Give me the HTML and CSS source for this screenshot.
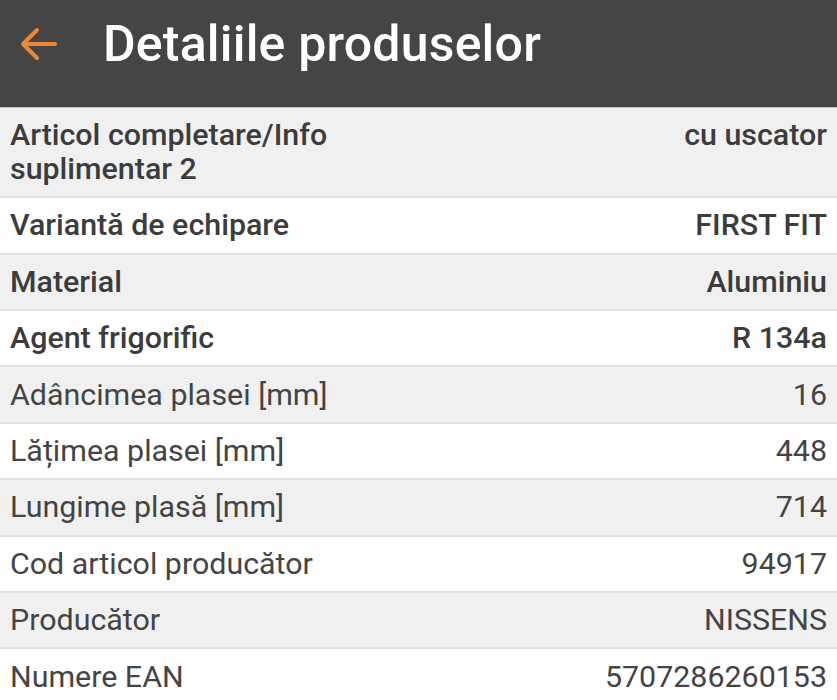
FILE: index.html
```html
<!DOCTYPE html>
<html lang="ro">
<head>
<meta charset="utf-8">
<title>Detaliile produselor</title>
<link rel="stylesheet" href="styles.css">
</head>
<body>
<header class="appbar">
  <svg class="back" width="40" height="40" viewBox="0 0 40 40" aria-hidden="true">
    <path d="M37 20H5M19 6L5 20l14 14" fill="none" stroke="#ea8838" stroke-width="4" stroke-linecap="round" stroke-linejoin="round"/>
  </svg>
  <h1 class="title">Detaliile produselor</h1>
</header>
<main class="list">
  <div class="row strong"><span class="label">Articol completare/Info suplimentar 2</span><span class="value">cu uscator</span></div>
  <div class="row strong"><span class="label">Variantă de echipare</span><span class="value">FIRST FIT</span></div>
  <div class="row strong"><span class="label">Material</span><span class="value">Aluminiu</span></div>
  <div class="row strong"><span class="label">Agent frigorific</span><span class="value">R 134a</span></div>
  <div class="row"><span class="label">Adâncimea plasei [mm]</span><span class="value">16</span></div>
  <div class="row"><span class="label">Lățimea plasei [mm]</span><span class="value">448</span></div>
  <div class="row"><span class="label">Lungime plasă [mm]</span><span class="value">714</span></div>
  <div class="row"><span class="label">Cod articol producător</span><span class="value">94917</span></div>
  <div class="row"><span class="label">Producător</span><span class="value">NISSENS</span></div>
  <div class="row"><span class="label">Numere EAN</span><span class="value">5707286260153</span></div>
</main>
</body>
</html>
```
FILE: styles.css
```css
html, body {
  margin: 0;
  padding: 0;
  background: #ffffff;
}
body {
  font-family: Roboto, "Liberation Sans", sans-serif;
  color: #444444;
  overflow: hidden;
}
.appbar {
  height: 108px;
  background: #454545;
  border-bottom: 1px solid #c4c4c4;
  display: flex;
  align-items: center;
  padding-left: 18px;
  padding-bottom: 20px;
  box-sizing: border-box;
}
.back {
  flex: none;
  display: block;
}
.title {
  margin: 0 0 0 45px;
  color: #ffffff;
  font-size: 50px;
  font-weight: 500;
  letter-spacing: 0.2px;
}
.list {
  display: flex;
  flex-direction: column;
}
.row {
  display: grid;
  grid-template-columns: 1fr 1fr;
  padding: 10.3px 10px;
  font-size: 30.4px;
  line-height: 33.8px;
  border-bottom: 2px solid #e2e2e2;
  background: #ffffff;
}
.row:nth-child(odd) {
  background: #f0f0f0;
}
.row.strong {
  font-weight: 500;
  color: #3c3c3c;
}
.value {
  text-align: right;
}
```
